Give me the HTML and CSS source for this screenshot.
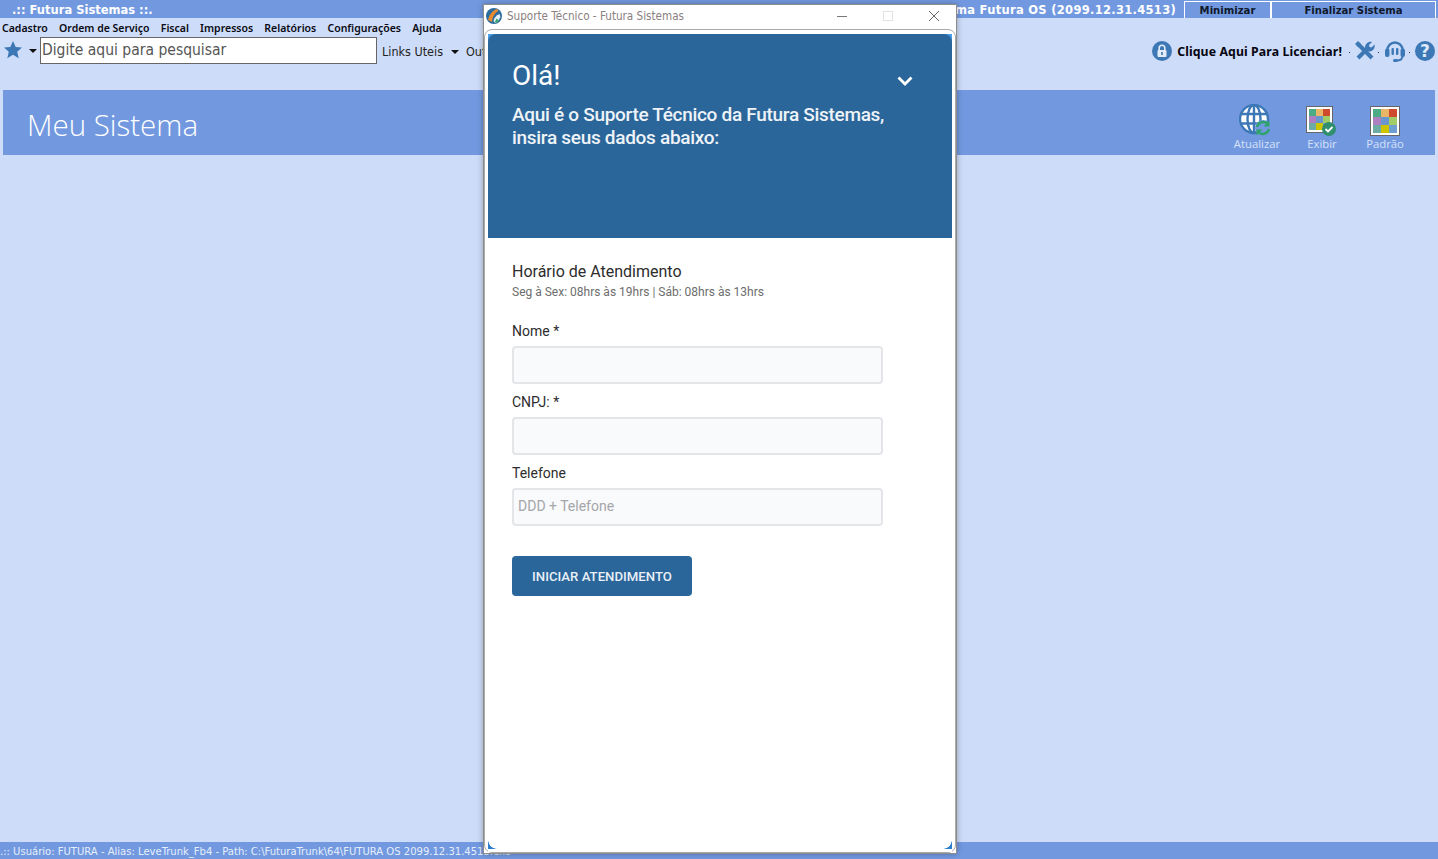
FILE: index.html
```html
<!DOCTYPE html>
<html lang="pt-BR">
<head>
<meta charset="utf-8">
<title>Futura Sistemas</title>
<link rel="stylesheet" href="styles.css">
</head>
<body>
<div class="app">
  <div class="titlebar">
    <span class="app-title">.:: Futura Sistemas ::.</span>
    <span class="sys-title">Sistema Futura OS (2099.12.31.4513)</span>
    <button class="tb-btn tb-min">Minimizar</button>
    <button class="tb-btn tb-end">Finalizar Sistema</button>
  </div>
  <nav class="menu">
    <span>Cadastro</span><span>Ordem de Serviço</span><span>Fiscal</span><span>Impressos</span><span>Relatórios</span><span>Configurações</span><span>Ajuda</span>
  </nav>
  <div class="toolrow">
    <svg class="star" viewBox="0 0 20 20" width="20" height="20"><path d="M10 1l2.700 6 6.300.6-4.800 4.200 1.500 6.400L10 14.800l-5.700 3.400 1.500-6.400L1 7.600 7.300 7z" fill="#3d78b6"/></svg>
    <span class="caret caret-star"></span>
    <div class="search">Digite aqui para pesquisar</div>
    <span class="links">Links Uteis</span>
    <span class="caret caret-links"></span>
    <span class="links links-o">Outros</span>
    <div class="tool-right">
      <svg viewBox="0 0 20 20" width="20" height="20"><circle cx="10" cy="10" r="10" fill="#3d78b6"/><rect x="5.500" y="9" width="9" height="7" rx="1" fill="#e4ecf8"/><path d="M7.200 9V7a2.800 2.800 0 0 1 5.600 0v2" fill="none" stroke="#e4ecf8" stroke-width="1.600"/><rect x="9.200" y="11" width="1.600" height="3" fill="#3d78b6"/></svg>
      <span class="license">Clique Aqui Para Licenciar!</span>
      <span class="dot"></span>
      <svg viewBox="0 0 20 20" width="20" height="20"><g fill="none" stroke="#3d78b6" stroke-width="4"><path d="M3 3l14 14"/><path d="M3 17L13 7"/></g><path d="M10 7.500C9.500 3.500 13 0 17 1l-3 3 .5 2 2 .5 3-3c1 4-2.500 7.500-6.500 7z" fill="#3d78b6"/><path d="M0 3l3-3 3 3-3 3z" fill="#3d78b6"/></svg>
      <span class="dot"></span>
      <svg viewBox="0 0 22 22" width="22" height="22"><path d="M3.500 12V10a7.500 7.500 0 0 1 15 0v2" fill="none" stroke="#3d78b6" stroke-width="2.400"/><rect x="1" y="8.500" width="4.500" height="8.500" rx="2" fill="#3d78b6"/><rect x="16.500" y="8.500" width="4.500" height="8.500" rx="2" fill="#3d78b6"/><rect x="7.500" y="8" width="2.400" height="7" rx="1" fill="#3d78b6"/><rect x="12" y="8" width="2.400" height="7" rx="1" fill="#3d78b6"/><path d="M18.500 16c0 3-2 4.500-6 4.500" fill="none" stroke="#3d78b6" stroke-width="2"/><rect x="9" y="19" width="5" height="3" rx="1.500" fill="#3d78b6"/></svg>
      <span class="dot"></span>
      <svg viewBox="0 0 20 20" width="20" height="20"><circle cx="10" cy="10" r="10" fill="#3d78b6"/><text x="10" y="15.500" class="qmark" text-anchor="middle">?</text></svg>
    </div>
  </div>
  <header class="band">
    <h1 class="band-title">Meu Sistema</h1>
    <div class="band-actions">
      <div class="action action-a">
        <svg class="globe" viewBox="0 0 32 32" width="32" height="32">
          <circle cx="15" cy="15" r="14" fill="#fff"/>
          <g fill="none" stroke="#3d78b6" stroke-width="2.400"><circle cx="15" cy="15" r="14"/><ellipse cx="15" cy="15" rx="6.500" ry="14"/><path d="M15 1v28M1 10h28M1 19.500h28"/></g>
          <circle cx="24" cy="24" r="8" fill="#7299e0"/>
          <g fill="none" stroke="#2ea36b" stroke-width="2.400"><path d="M18 23a6.500 6.500 0 0 1 11-3"/><path d="M30 25a6.500 6.500 0 0 1-11 3"/></g>
          <path d="M30.500 16.500v6h-6zM17.500 31.500v-6h6z" fill="#2ea36b"/>
        </svg>
        <span>Atualizar</span>
      </div>
      <div class="action action-e">
        <div class="palette-wrap">
          <div class="palette"><i class="c1"></i><i class="c2"></i><i class="c3"></i><i class="c4"></i><i class="c5"></i><i class="c6"></i><i class="c7"></i><i class="c8"></i><i class="c9"></i></div>
          <svg class="check" viewBox="0 0 14 14" width="14" height="14"><circle cx="7" cy="7" r="7" fill="#2f8f6f"/><path d="M3.500 7l2.500 2.500 4.500-4.500" fill="none" stroke="#fff" stroke-width="1.800"/></svg>
        </div>
        <span>Exibir</span>
      </div>
      <div class="action action-p">
        <div class="palette palette-lg"><i class="c1"></i><i class="c2"></i><i class="c3"></i><i class="c4"></i><i class="c5"></i><i class="c6"></i><i class="c7"></i><i class="c8"></i><i class="c9"></i></div>
        <span>Padrão</span>
      </div>
    </div>
  </header>
  <main class="workspace"></main>
  <footer class="status">.:: Usuário: FUTURA - Alias: LeveTrunk_Fb4 - Path: C:\FuturaTrunk\64\FUTURA OS 2099.12.31.4513.exe</footer>
</div>

<section class="window">
  <div class="win-title">
    <svg class="win-logo" viewBox="0 0 16 16" width="16" height="16"><circle cx="8" cy="8" r="8" fill="#2b6b9e"/><path d="M2 12C3 7 6 3 11 1l1.500 2C8.500 5 6.500 9 6 14z" fill="#e98b2e"/><path d="M7.500 13c.5-3 2.500-5.500 6-7l1 3-3 5-2.500 1z" fill="#e6f0f8"/><path d="M8.500 14.500l2-4 2.500 2-2 2z" fill="#3aa86b"/></svg>
    <span class="win-name">Suporte Técnico - Futura Sistemas</span>
    <div class="win-ctrls">
      <svg viewBox="0 0 12 12" width="12" height="12"><path d="M1 6.500h10" stroke="#777" fill="none"/></svg>
      <svg viewBox="0 0 12 12" width="12" height="12"><rect x="1.500" y="1.500" width="9" height="9" stroke="#e2e2e2" fill="none"/></svg>
      <svg viewBox="0 0 12 12" width="12" height="12"><path d="M1 1l10 10M11 1L1 11" stroke="#666" fill="none"/></svg>
    </div>
  </div>
  <div class="frame">
    <div class="chat">
      <div class="chat-head">
        <div class="hello-row">
          <h2 class="hello">Olá!</h2>
          <svg class="chev" viewBox="0 0 16 10" width="16" height="10"><path d="M1.500 1.500L8 8l6.500-6.500" fill="none" stroke="#fff" stroke-width="2.800"/></svg>
        </div>
        <p class="intro">Aqui é o Suporte Técnico da Futura Sistemas, insira seus dados abaixo:</p>
      </div>
      <form class="chat-body">
        <div class="hours-title">Horário de Atendimento</div>
        <div class="hours">Seg à Sex: 08hrs às 19hrs | Sáb: 08hrs às 13hrs</div>
        <label class="lbl lbl-first">Nome *</label>
        <div class="field"></div>
        <label class="lbl">CNPJ: *</label>
        <div class="field"></div>
        <label class="lbl">Telefone</label>
        <div class="field field-ph">DDD + Telefone</div>
        <div class="submit">INICIAR ATENDIMENTO</div>
      </form>
    </div>
  </div>
</section>
</body>
</html>
```
FILE: styles.css
```css
* { box-sizing: border-box; }
html, body { margin: 0; height: 100%; overflow: hidden; }
body { background: #cddcf8; font-family: "DejaVu Sans", sans-serif; }
.app { display: flex; flex-direction: column; height: 859px; width: 1438px; }

.titlebar { height: 18px; background: #7299e0; display: flex; align-items: center; padding: 1px 0 0 12px; color: #fff; font: bold 11.500px "DejaVu Sans", sans-serif; }
.sys-title { margin-left: auto; margin-right: 8px; letter-spacing: .3px; }
.tb-btn { height: 17px; margin-top: 0; background: #7299e0; border: 0; border-top: 1px solid #fff; border-left: 1px solid #fff; border-right: 1px solid #fff; padding: 0; font: bold 10.100px "DejaVu Sans", sans-serif; color: #10182c; }
.tb-min { width: 87px; }
.tb-end { width: 165px; margin-right: 2px; }

.menu { height: 19px; display: flex; gap: 11.200px; align-items: center; padding: 1px 0 0 2px; font: 600 10.500px "Noto Sans", sans-serif; color: #0a0a14; }

.toolrow { height: 27px; display: flex; align-items: flex-start; }
.star { margin: 3px 0 0 3px; }
.caret { width: 0; height: 0; border-left: 4.500px solid transparent; border-right: 4.500px solid transparent; border-top: 4px solid #111; }
.caret-star { margin: 12px 0 0 6px; }
.search { width: 337px; height: 27px; margin-left: 3px; background: #fff; border: 1px solid #666; padding: 2px 0 0 1px; font: 15.500px/20px "DejaVu Sans Condensed", "DejaVu Sans", sans-serif; color: #555; white-space: nowrap; }
.links { margin: 6px 0 0 5px; font: 12.500px/18px "DejaVu Sans Condensed", "DejaVu Sans", sans-serif; color: #222; }
.caret-links { margin: 13px 0 0 8px; }
.links-o { margin-left: 7px; }
.tool-right { margin-left: auto; display: flex; align-items: center; padding-right: 3px; margin-top: 3px; }
.tool-right svg { display: block; }
.license { font: bold 12.300px "Noto Sans", sans-serif; color: #050510; margin: 0 4px 0 5px; letter-spacing: .1px; }
.dot { width: 1px; height: 1px; margin: 3px 5px 0 3px; background: #333; }
.qmark { font: bold 17px "DejaVu Sans", sans-serif; fill: #dfe9f8; }

.band { height: 65px; margin: 26px 3px 0; background: #7299e0; display: flex; align-items: stretch; }
.band-title { margin: 0; padding: 13px 0 0 24px; font: 300 29.500px/44px "Open Sans", sans-serif; color: #fff; }
.band-actions { margin-left: auto; display: flex; padding-right: 30px; }
.action { display: flex; flex-direction: column; align-items: center; font: 11.300px/14px "Open Sans", sans-serif; color: #d6e2f8; padding-top: 16px; }
.action span { margin-top: 1px; }
.globe { margin: -2px 0 0 -5px; }
.action-a { width: 48px; }
.action-e { width: 40px; margin-left: 20px; }
.action-e span { margin-left: 2px; }
.action-p { width: 40px; margin-left: 24px; }
.palette-wrap { position: relative; width: 30px; height: 30px; }
.palette { width: 27px; height: 27px; background: #fff; border: 1px solid #666; padding: 2px; display: grid; grid-template-columns: repeat(3, 1fr); grid-template-rows: repeat(3, 1fr); }
.palette-lg { width: 30px; height: 30px; }
.palette i { display: block; }
.c1 { background: #4bab85; } .c2 { background: #e9b566; } .c3 { background: #d04a2e; }
.c4 { background: #ac80c0; } .c5 { background: #6b95cf; } .c6 { background: #a2cc66; }
.c7 { background: #6daba5; } .c8 { background: #cfc400; } .c9 { background: #6f9fd0; }
.check { position: absolute; right: 0; bottom: 0; }

.workspace { flex: 1; }
.status { height: 17px; background: #7299e0; color: #e6eefb; font: 11.150px/19px "DejaVu Sans Condensed", "DejaVu Sans", sans-serif; white-space: nowrap; overflow: hidden; }

.window { position: absolute; left: 483px; top: 4px; width: 474px; height: 850px; background: #fff; border: 1px solid #8d8d8d; box-shadow: 0 0 6px rgba(0,0,0,.3); display: flex; flex-direction: column; }
.win-title { height: 24px; flex: 0 0 auto; display: flex; align-items: center; padding: 0 0 2px 2px; font: 11.600px "DejaVu Sans Condensed", "DejaVu Sans", sans-serif; color: #8a8080; }
.win-logo { margin-right: 5px; }
.win-ctrls { margin-left: auto; display: flex; gap: 34px; padding-right: 16px; }
.frame { flex: 1; border: 1px solid #a9a9a9; border-radius: 8px; padding: 4px 3px 0; min-height: 0; position: relative; background: #fff; }
.frame::after { content: ""; position: absolute; right: 3px; bottom: 3px; width: 9px; height: 9px; background: radial-gradient(circle at 0 0, transparent 8.500px, #2a7fd0 9px); }
.frame::before { content: ""; position: absolute; left: 3px; bottom: 3px; width: 9px; height: 9px; background: radial-gradient(circle at 100% 0, transparent 8.500px, #2a7fd0 9px); }
.chat { height: 100%; background: linear-gradient(#4a9fe8, #4a9fe8) no-repeat top / 100% 10px #fff; }

.chat-head { height: 204px; background: #2b669a; border-radius: 8px 8px 0 0; padding: 25px 24px 0; color: #fff; }
.hello-row { display: flex; justify-content: space-between; align-items: flex-start; }
.hello { margin: 0; font: 400 28px/34px Roboto, sans-serif; }
.chev { margin: 17px 15px 0 0; }
.intro { margin: 10px 0 0; width: 400px; font: 500 19px/23px Roboto, sans-serif; letter-spacing: -.3px; color: #eef3f8; }

.chat-body { padding: 24px 24px 0; font-family: Roboto, sans-serif; color: #2d2d2d; }
.hours-title { font-size: 16px; line-height: 19px; }
.hours { font-size: 12px; line-height: 14px; margin-top: 4px; color: #6d6d6d; }
.lbl { display: block; font-size: 14px; line-height: 17px; height: 17px; margin: 10px 0 6px; }
.lbl-first { margin-top: 24px; }
.field { width: 371px; height: 38px; background: #f9fafc; border: 2px solid #e4e5e8; border-radius: 4px; }
.field-ph { color: #a4a6a9; font-size: 14px; line-height: 32px; padding-left: 4px; }
.submit { width: 180px; height: 40px; margin-top: 30px; background: #2b669a; border-radius: 4px; color: #e9f0f7; font: 500 13.200px/41px Roboto, sans-serif; text-align: center; }
```
